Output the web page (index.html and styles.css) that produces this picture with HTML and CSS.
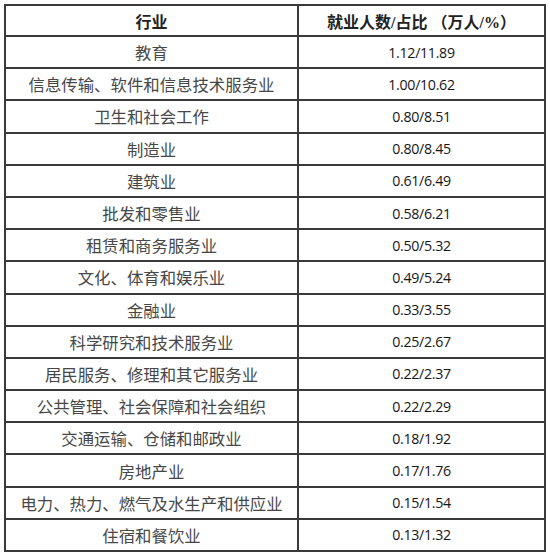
FILE: index.html
```html
<!DOCTYPE html>
<html lang="zh-CN">
<head>
<meta charset="utf-8">
<title>行业就业人数</title>
<link rel="stylesheet" href="styles.css">
</head>
<body>
<table class="data">
  <thead>
    <tr><th class="ind">行业</th><th class="val">就业人数/占比 （万人/%）</th></tr>
  </thead>
  <tbody>
    <tr><td class="ind">教育</td><td class="val">1.12/11.89</td></tr>
    <tr><td class="ind">信息传输、软件和信息技术服务业</td><td class="val">1.00/10.62</td></tr>
    <tr><td class="ind">卫生和社会工作</td><td class="val">0.80/8.51</td></tr>
    <tr><td class="ind">制造业</td><td class="val">0.80/8.45</td></tr>
    <tr><td class="ind">建筑业</td><td class="val">0.61/6.49</td></tr>
    <tr><td class="ind">批发和零售业</td><td class="val">0.58/6.21</td></tr>
    <tr><td class="ind">租赁和商务服务业</td><td class="val">0.50/5.32</td></tr>
    <tr><td class="ind">文化、体育和娱乐业</td><td class="val">0.49/5.24</td></tr>
    <tr><td class="ind">金融业</td><td class="val">0.33/3.55</td></tr>
    <tr><td class="ind">科学研究和技术服务业</td><td class="val">0.25/2.67</td></tr>
    <tr><td class="ind">居民服务、修理和其它服务业</td><td class="val">0.22/2.37</td></tr>
    <tr><td class="ind">公共管理、社会保障和社会组织</td><td class="val">0.22/2.29</td></tr>
    <tr><td class="ind">交通运输、仓储和邮政业</td><td class="val">0.18/1.92</td></tr>
    <tr><td class="ind">房地产业</td><td class="val">0.17/1.76</td></tr>
    <tr><td class="ind">电力、热力、燃气及水生产和供应业</td><td class="val">0.15/1.54</td></tr>
    <tr><td class="ind">住宿和餐饮业</td><td class="val">0.13/1.32</td></tr>
  </tbody>
</table>
</body>
</html>
```
FILE: styles.css
```css
html, body {
  margin: 0;
  padding: 0;
  background: #ffffff;
}

.data {
  margin: 4px 0 0 4px;
  border-collapse: separate;
  border-spacing: 0;
  border-top: 2px solid #3a3a3a;
  border-left: 2px solid #3a3a3a;
  table-layout: fixed;
  width: 542px;
}

.data th,
.data td {
  box-sizing: border-box;
  height: 32.2px;
  padding: 0;
  text-align: center;
  vertical-align: middle;
  border-right: 2px solid #3a3a3a;
  border-bottom: 2px solid #3a3a3a;
  white-space: nowrap;
  overflow: hidden;
}

.data th {
  height: 31px;
  font-family: "Liberation Serif", "Noto Sans CJK SC", serif;
  font-weight: bold;
  font-size: 16px;
  color: #222222;
}

.data .ind {
  width: 293px;
}

.data .val {
  width: 247px;
}

.data td.ind {
  font-family: "Noto Sans CJK SC", sans-serif;
  font-size: 16.4px;
  font-weight: 400;
  color: #474747;
}

.data td.val {
  font-family: "Open Sans", "Liberation Sans", sans-serif;
  font-size: 14.2px;
  letter-spacing: -0.3px;
  color: #161616;
}
```
